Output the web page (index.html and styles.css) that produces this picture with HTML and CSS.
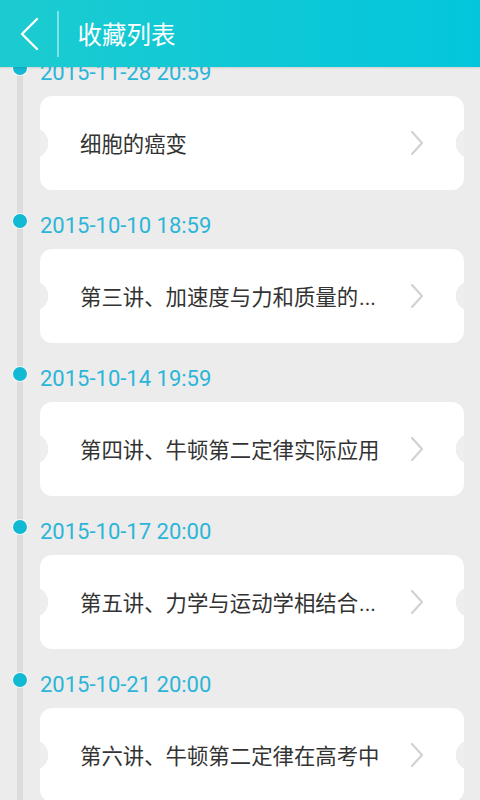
FILE: index.html
```html
<!DOCTYPE html>
<html lang="zh">
<head>
<meta charset="utf-8">
<title>收藏列表</title>
<link rel="stylesheet" href="styles.css">
</head>
<body>
<div class="app">
  <header class="topbar">
    <div class="back">
      <svg width="20" height="34" viewBox="0 0 20 34"><polyline points="17,2 2,17 17,32" fill="none" stroke="#fff" stroke-width="2.4" stroke-linecap="round" stroke-linejoin="round"/></svg>
    </div>
    <div class="divider"></div>
    <h1 class="title">收藏列表</h1>
  </header>
  <main class="timeline">
    <section class="item">
      <div class="date"><span class="dot"></span><span class="time">2015-11-28 20:59</span></div>
      <div class="card"><span class="name">细胞的癌变</span><span class="chev"><svg width="14" height="26" viewBox="0 0 14 26"><polyline points="2,2 12,13 2,24" fill="none" stroke="#d2d2d2" stroke-width="2.2" stroke-linecap="round" stroke-linejoin="round"/></svg></span></div>
    </section>
    <section class="item">
      <div class="date"><span class="dot"></span><span class="time">2015-10-10 18:59</span></div>
      <div class="card"><span class="name">第三讲、加速度与力和质量的<span class="ell">...</span></span><span class="chev"><svg width="14" height="26" viewBox="0 0 14 26"><polyline points="2,2 12,13 2,24" fill="none" stroke="#d2d2d2" stroke-width="2.2" stroke-linecap="round" stroke-linejoin="round"/></svg></span></div>
    </section>
    <section class="item">
      <div class="date"><span class="dot"></span><span class="time">2015-10-14 19:59</span></div>
      <div class="card"><span class="name">第四讲、牛顿第二定律实际应用</span><span class="chev"><svg width="14" height="26" viewBox="0 0 14 26"><polyline points="2,2 12,13 2,24" fill="none" stroke="#d2d2d2" stroke-width="2.2" stroke-linecap="round" stroke-linejoin="round"/></svg></span></div>
    </section>
    <section class="item">
      <div class="date"><span class="dot"></span><span class="time">2015-10-17 20:00</span></div>
      <div class="card"><span class="name">第五讲、力学与运动学相结合<span class="ell">...</span></span><span class="chev"><svg width="14" height="26" viewBox="0 0 14 26"><polyline points="2,2 12,13 2,24" fill="none" stroke="#d2d2d2" stroke-width="2.2" stroke-linecap="round" stroke-linejoin="round"/></svg></span></div>
    </section>
    <section class="item">
      <div class="date"><span class="dot"></span><span class="time">2015-10-21 20:00</span></div>
      <div class="card"><span class="name">第六讲、牛顿第二定律在高考中</span><span class="chev"><svg width="14" height="26" viewBox="0 0 14 26"><polyline points="2,2 12,13 2,24" fill="none" stroke="#d2d2d2" stroke-width="2.2" stroke-linecap="round" stroke-linejoin="round"/></svg></span></div>
    </section>
  </main>
</div>
</body>
</html>
```
FILE: styles.css
```css
html, body {
  margin: 0;
  padding: 0;
  background: #ececec;
}
.app {
  width: 480px;
  height: 800px;
  overflow: hidden;
  font-family: Roboto, "Noto Sans CJK SC", sans-serif;
}
.topbar {
  position: relative;
  z-index: 2;
  height: 67px;
  display: flex;
  align-items: center;
  background: linear-gradient(to right, #1ccbd0, #03c6dc);
  box-shadow: 0 1px 2px rgba(0,0,0,0.12);
}
.back {
  width: 57px;
  display: flex;
  justify-content: center;
  padding-left: 2px;
  box-sizing: border-box;
}
.back svg { display: block; }
.divider {
  width: 1.5px;
  height: 46px;
  background: rgba(255,255,255,0.45);
}
.title {
  margin: 0 0 0 19px;
  font-family: "Noto Sans CJK SC", sans-serif;
  font-weight: 400;
  font-size: 24.5px;
  color: #fff;
}
.timeline {
  margin-top: -19px;
  background: linear-gradient(to right, transparent 17px, #dcdcdc 17px, #dcdcdc 23px, transparent 23px);
  padding-bottom: 40px;
}
.item {
  margin-bottom: 11px;
}
.date {
  height: 48px;
  display: flex;
  align-items: center;
}
.dot {
  width: 14px;
  height: 14px;
  border-radius: 50%;
  background: #12b9d3;
  box-shadow: 0 0 0 1px rgba(255,255,255,0.7);
  margin-left: 13px;
  margin-top: -8px;
}
.time {
  margin-left: 13px;
  font-family: Roboto, sans-serif;
  font-size: 22px;
  color: #2bb5d8;
}
.card {
  margin-left: 40px;
  width: 424px;
  height: 94px;
  box-sizing: border-box;
  border-radius: 12px;
  background:
    radial-gradient(circle at -7px 50%, #eeeeee 15px, transparent 15.5px),
    radial-gradient(circle at calc(100% + 7px) 50%, #eeeeee 15px, transparent 15.5px),
    #ffffff;
  display: flex;
  align-items: center;
  padding-left: 40px;
}
.name {
  flex: 1;
  font-family: "Noto Sans CJK SC", sans-serif;
  font-size: 21.4px;
  color: #333333;
  white-space: nowrap;
  margin-top: -2px;
}
.ell {
  font-family: Roboto, sans-serif;
  margin-left: 1px;
}
.chev {
  width: 14px;
  margin-right: 40px;
  display: flex;
}
.chev svg { display: block; }
```
